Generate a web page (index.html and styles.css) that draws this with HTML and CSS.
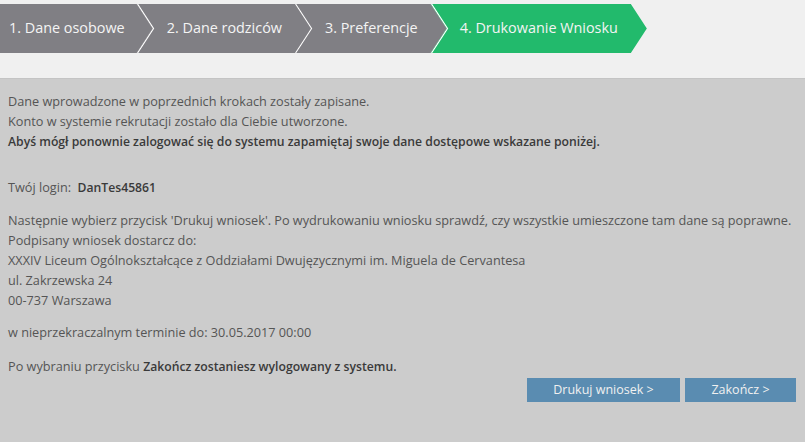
FILE: index.html
```html
<!DOCTYPE html>
<html>
	<head>
		<meta charset="utf-8">
		<link rel="stylesheet" href="styles.css">
		<title>Drukowanie wniosku</title>
	</head>
	<body>
		<div class="top">
			<div class="steps">
				<div class="step first">1. Dane osobowe</div>
				<div class="step">
					<svg class="sep" width="18" height="49" viewBox="0 0 18 49"><polyline points="0.5,0 16.5,24.5 0.5,49" fill="none" stroke="#fff" stroke-width="1.2"/></svg>
					2. Dane rodziców
				</div>
				<div class="step">
					<svg class="sep" width="18" height="49" viewBox="0 0 18 49"><polyline points="0.5,0 16.5,24.5 0.5,49" fill="none" stroke="#fff" stroke-width="1.2"/></svg>
					3. Preferencje
				</div>
				<div class="step active">
					<svg class="sep" width="18" height="49" viewBox="0 0 18 49"><polyline points="0.5,0 16.5,24.5 0.5,49" fill="none" stroke="#fff" stroke-width="1.2"/></svg>
					4. Drukowanie Wniosku
				</div>
			</div>
		</div>
		<div class="content">
			<p class="intro">
				Dane wprowadzone w poprzednich krokach zostały zapisane.<br>
				Konto w systemie rekrutacji zostało dla Ciebie utworzone.<br>
				<b>Abyś mógł ponownie zalogować się do systemu zapamiętaj swoje dane dostępowe wskazane poniżej.</b>
			</p>
			<p class="login">Twój login:&nbsp; <b>DanTes45861</b></p>
			<p>
				Następnie wybierz przycisk 'Drukuj wniosek'. Po wydrukowaniu wniosku sprawdź, czy wszystkie umieszczone tam dane są poprawne.<br>
				Podpisany wniosek dostarcz do:<br>
				XXXIV Liceum Ogólnokształcące z Oddziałami Dwujęzycznymi im. Miguela de Cervantesa<br>
				ul. Zakrzewska 24<br>
				00-737 Warszawa
			</p>
			<p>w nieprzekraczalnym terminie do: 30.05.2017 00:00</p>
			<p class="last">Po wybraniu przycisku <b>Zakończ zostaniesz wylogowany z systemu.</b></p>
			<div class="buttons">
				<a href="#" class="btn print">Drukuj wniosek &gt;</a>
				<a href="#" class="btn end">Zakończ &gt;</a>
			</div>
		</div>
	</body>
</html>
```

FILE: styles.css
```css
*{
	margin: 0;
	padding: 0;
	box-sizing: border-box;
}
html,body{
	height: 100%;
}
body{
	font-family: "Open Sans", "DejaVu Sans", sans-serif;
	background: #cccccc;
	display: flex;
	flex-direction: column;
}
.top{
	background: #f0f0f0;
	padding-top: 4px;
	height: 79px;
	border-bottom: 1px solid #c4c4c4;
}
.steps{
	display: flex;
	height: 49px;
}
.step{
	position: relative;
	height: 49px;
	line-height: 47px;
	font-size: 14.4px;
	color: #f4f4f4;
	background: #807f84;
	padding: 0 29px 0 30px;
	margin-left: -16px;
	white-space: nowrap;
	clip-path: polygon(0 0, calc(100% - 16px) 0, 100% 50%, calc(100% - 16px) 100%, 0 100%, 16px 50%);
}
.step.first{
	margin-left: 0;
	padding-left: 9px;
	padding-right: 28px;
	clip-path: polygon(0 0, calc(100% - 16px) 0, 100% 50%, calc(100% - 16px) 100%, 0 100%);
}
.step.active{
	background: #22ba6c;
	padding-left: 29px;
}
.sep{
	position: absolute;
	left: 0;
	top: 0;
}
.content{
	flex: 1;
	padding: 12px 9px 0 8px;
	font-size: 12.7px;
	line-height: 20px;
	color: #555;
}
.content b{
	font-size: 12.2px;
	font-weight: 600;
	color: #3a3a3a;
}
.content p{
	margin-bottom: 12px;
}
.content p.intro{
	margin-bottom: 25px;
}
.content p.last{
	margin-top: 14px;
	margin-bottom: 1px;
}
.buttons{
	display: flex;
	justify-content: flex-end;
	gap: 5px;
}
.btn{
	display: block;
	height: 24px;
	line-height: 23px;
	text-align: center;
	font-size: 12.5px;
	color: #f0f0f0;
	background: #5a8cb1;
	text-decoration: none;
}
.btn.print{
	width: 153px;
}
.btn.end{
	width: 111px;
}
```
